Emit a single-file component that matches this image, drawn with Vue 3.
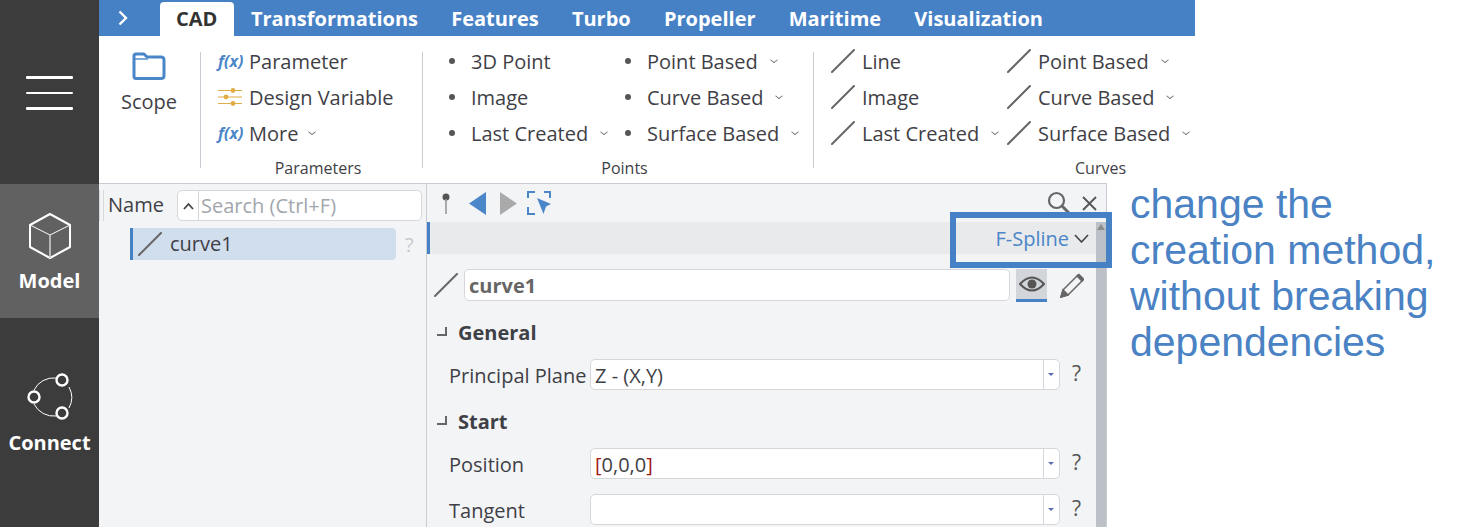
<template>
  <div class="app">
    <aside class="side">
      <button class="side__menu" aria-label="Menu">
        <span></span><span></span><span></span>
      </button>
      <div class="side__item side__item--active">
        <svg width="46" height="48" viewBox="0 0 46 48" fill="none" stroke="#fff">
          <path d="M23 2 L43 13 V35 L23 46 L3 35 V13 Z" stroke-width="2" stroke-linejoin="round" />
          <path d="M3 13 L23 23 L43 13" stroke-width="1" />
          <path d="M23 23 V46" stroke-width="1.6" stroke="#ccc" />
        </svg>
        <span>Model</span>
      </div>
      <div class="side__item side__item--connect">
        <svg width="48" height="48" viewBox="0 0 48 48" fill="none" stroke="#fff">
          <path d="M8 17 A22 22 0 0 1 30 5 M43 14 A22 22 0 0 1 43 35 M30 43 A22 22 0 0 1 8 31" stroke-width="1" />
          <circle cx="36" cy="7" r="5.5" stroke-width="2.4" />
          <circle cx="8" cy="24" r="5.5" stroke-width="2.4" />
          <circle cx="36" cy="40" r="5.5" stroke-width="2.4" />
        </svg>
        <span>Connect</span>
      </div>
    </aside>

    <div class="main">
      <nav class="tabs">
        <svg class="tabs__toggle" width="10" height="16" viewBox="0 0 10 16" fill="none" stroke="#fff" stroke-width="2.4">
          <path d="M1.5 1.5 L8 8 L1.5 14.5" />
        </svg>
        <span v-for="tab in tabs" :key="tab" class="tabs__tab" :class="{ 'tabs__tab--active': tab === 'CAD' }">{{ tab }}</span>
      </nav>

      <section class="ribbon">
        <div class="group group--scope">
          <svg width="34" height="28" viewBox="0 0 34 28" fill="none" stroke="#4a86c8" stroke-width="3">
            <path d="M2 24 V4 Q2 2 4 2 H12 L15 5 H29 Q32 5 32 8 V24 Q32 26.500 29 26.500 H4 Q2 26.500 2 24 Z" stroke-linejoin="round" />
            <path d="M2 7 H16" stroke-width="1.4" />
          </svg>
          <span class="group__scope-label">Scope</span>
        </div>

        <div class="group group--params">
          <div class="group__body">
            <div class="group__col">
              <div class="tool"><i class="fx">f(x)</i>Parameter</div>
              <div class="tool">
                <svg class="tool__icon-sliders" width="25" height="20" viewBox="0 0 25 20" stroke="#e0ae45" fill="#e0ae45">
                  <path d="M1 3.500 H25 M1 10 H25 M1 16.500 H25" stroke-width="1.2" />
                  <circle cx="16" cy="3.500" r="2.400" stroke="none" />
                  <circle cx="9" cy="10" r="2.400" stroke="none" />
                  <circle cx="16" cy="16.500" r="2.400" stroke="none" />
                </svg>
                Design Variable
              </div>
              <div class="tool"><i class="fx">f(x)</i>More<span class="caret caret--more"></span></div>
            </div>
          </div>
          <div class="group__label">Parameters</div>
        </div>

        <div class="group group--points">
          <div class="group__body">
            <div class="group__col group__col--points">
              <div v-for="p in pointsLeft" :key="p.name" class="tool">
                <span class="dot"></span>{{ p.name }}<span v-if="p.more" class="caret"></span>
              </div>
            </div>
            <div class="group__col">
              <div v-for="p in based" :key="p" class="tool">
                <span class="dot"></span>{{ p }}<span class="caret"></span>
              </div>
            </div>
          </div>
          <div class="group__label">Points</div>
        </div>

        <div class="group group--curves">
          <div class="group__body">
            <div class="group__col group__col--curves">
              <div v-for="c in curvesLeft" :key="c.name" class="tool">
                <svg class="line-icon" width="24" height="24" viewBox="0 0 24 24"><path d="M1 23 L23 1" /></svg>
                {{ c.name }}<span v-if="c.more" class="caret"></span>
              </div>
            </div>
            <div class="group__col">
              <div v-for="c in based" :key="c" class="tool">
                <svg class="line-icon" width="24" height="24" viewBox="0 0 24 24"><path d="M1 23 L23 1" /></svg>
                {{ c }}<span class="caret"></span>
              </div>
            </div>
          </div>
          <div class="group__label">Curves</div>
        </div>
      </section>

      <div class="lower">
        <div class="work">
          <section class="tree">
            <div class="tree__head">
              <span class="tree__name">Name</span>
              <div class="search">
                <span class="search__sort">
                  <svg width="11" height="8" viewBox="0 0 11 8" fill="none" stroke="#444" stroke-width="1.8"><path d="M1 7 L5.500 2 L10 7" /></svg>
                </span>
                <span class="search__text">Search (Ctrl+F)</span>
              </div>
            </div>
            <div class="tree__row">
              <div class="tree__item">
                <svg class="line-icon" width="24" height="24" viewBox="0 0 24 24"><path d="M1 23 L23 1" /></svg>
                <span class="tree__label">curve1</span>
              </div>
              <span class="tree__help">?</span>
            </div>
          </section>

          <section class="props">
            <div class="props__tools">
              <svg width="10" height="24" viewBox="0 0 10 24">
                <circle cx="5" cy="6" r="3.500" fill="#555" />
                <path d="M5 8 V23" stroke="#999" stroke-width="1.600" />
              </svg>
              <svg class="props__back" width="17" height="23" viewBox="0 0 17 23"><path d="M17 0 V23 L0 11.500 Z" fill="#4a86c8" /></svg>
              <svg class="props__next" width="17" height="23" viewBox="0 0 17 23"><path d="M0 0 V23 L17 11.500 Z" fill="#aaa" /></svg>
              <svg class="props__pick" width="25" height="24" viewBox="0 0 25 24" fill="none" stroke="#4a86c8" stroke-width="2">
                <path d="M1 7 V1 H8 M17 1 H23 V7 M1 16 V23 H8" />
                <path d="M10 7 L24 13 L19 15.500 L16.500 23 Z" fill="#4a86c8" stroke="none" />
              </svg>
              <span class="props__spacer"></span>
              <svg width="24" height="24" viewBox="0 0 24 24" fill="none" stroke="#666" stroke-width="2.200">
                <circle cx="9.500" cy="9.500" r="7.500" />
                <path d="M15 15 L23 23" stroke-width="3" />
              </svg>
              <svg class="props__close" width="15" height="15" viewBox="0 0 15 15" fill="none" stroke="#555" stroke-width="1.800">
                <path d="M1 1 L14 14 M14 1 L1 14" />
              </svg>
            </div>

            <div class="props__scrollarea">
              <div class="props__content">
                <div class="band">
                  <span class="band__method">F-Spline</span>
                  <svg width="15" height="9" viewBox="0 0 15 9" fill="none" stroke="#444" stroke-width="1.600"><path d="M1 1 L7.500 8 L14 1" /></svg>
                </div>

                <div class="title-row">
                  <svg class="line-icon" width="24" height="24" viewBox="0 0 24 24"><path d="M1 23 L23 1" /></svg>
                  <div class="title-row__input">curve1</div>
                  <span class="title-row__eye">
                    <svg width="26" height="16" viewBox="0 0 26 16">
                      <path d="M1 8 Q13 -5 25 8 Q13 21 1 8 Z" fill="none" stroke="#555" stroke-width="2" />
                      <circle cx="13" cy="8" r="4.500" fill="#555" />
                    </svg>
                  </span>
                  <svg class="title-row__pencil" width="24" height="25" viewBox="0 0 24 25" fill="none" stroke="#666" stroke-width="1.500">
                    <path d="M1 24 L3 17 L18 2 L23 7 L8 22 Z" stroke-linejoin="round" />
                    <path d="M1 24 L3 17 L8 22 Z" fill="#666" />
                    <path d="M17 3 L22 8 L23.500 6 L19 1.500 Z" fill="#666" />
                  </svg>
                </div>

                <h3 class="section">General</h3>
                <div class="field field--first">
                  <label class="field__label">Principal Plane</label>
                  <div class="field__input">
                    <span class="field__value">Z - (X,Y)</span>
                    <span class="field__drop"></span>
                  </div>
                  <span class="field__help">?</span>
                </div>

                <h3 class="section section--start">Start</h3>
                <div class="field field--first">
                  <label class="field__label">Position</label>
                  <div class="field__input">
                    <span class="field__value"><b class="bracket">[</b>0,0,0<b class="bracket">]</b></span>
                    <span class="field__drop"></span>
                  </div>
                  <span class="field__help">?</span>
                </div>
                <div class="field field--next">
                  <label class="field__label">Tangent</label>
                  <div class="field__input">
                    <span class="field__value"></span>
                    <span class="field__drop"></span>
                  </div>
                  <span class="field__help">?</span>
                </div>
              </div>
              <div class="scrollbar"><span class="scrollbar__arrow"></span></div>
            </div>

            <div class="callout"></div>
          </section>
        </div>

        <p class="note">change the creation method, without breaking dependencies</p>
      </div>
    </div>
  </div>
</template>

<script setup>
const tabs = ['CAD', 'Transformations', 'Features', 'Turbo', 'Propeller', 'Maritime', 'Visualization']

const pointsLeft = [
  { name: '3D Point' },
  { name: 'Image' },
  { name: 'Last Created', more: true }
]

const curvesLeft = [
  { name: 'Line' },
  { name: 'Image' },
  { name: 'Last Created', more: true }
]

const based = ['Point Based', 'Curve Based', 'Surface Based']
</script>

<style>
html,
body {
  margin: 0;
  background: #fff;
  overflow: hidden;
}
</style>

<style scoped>
.app {
  display: flex;
  width: 1465px;
  height: 527px;
  overflow: hidden;
  font-family: "Open Sans", "Liberation Sans", sans-serif;
  font-size: 20px;
  color: #3f3f46;
}

.side {
  flex: none;
  width: 99px;
  background: #3c3c3c;
  color: #fff;
  font-weight: 700;
}

.side__menu {
  display: flex;
  flex-direction: column;
  gap: 13px;
  width: 100%;
  height: 184px;
  padding: 76px 0 0 26px;
  border: 0;
  background: none;
  box-sizing: border-box;
}

.side__menu span {
  display: block;
  width: 47px;
  height: 2.500px;
  background: #fff;
  border-radius: 1px;
}

.side__item {
  display: flex;
  flex-direction: column;
  align-items: center;
  box-sizing: border-box;
  height: 134px;
  padding-top: 28px;
}

.side__item svg {
  flex: none;
}

.side__item--active {
  background: #616161;
}

.side__item--connect {
  padding-top: 55px;
}

.side__item span {
  flex: none;
  margin-top: 7px;
  line-height: 27px;
}

.side__item--connect span {
  margin-top: 8px;
}

.main {
  flex: none;
  width: 1366px;
}

.tabs {
  display: flex;
  align-items: flex-end;
  width: 1096px;
  height: 36px;
  background: #4681c6;
  color: #fff;
  font-weight: 700;
  line-height: 34px;
}

.tabs__toggle {
  align-self: center;
  margin: 0 32px 0 19px;
}

.tabs__tab {
  padding: 0 16.600px;
}

.tabs__tab--active {
  height: 34px;
  padding: 0 17px 0 16px;
  background: #fff;
  color: #333;
  border-radius: 4px 4px 0 0;
}

.ribbon {
  display: flex;
  width: 1096px;
  height: 147px;
  box-sizing: border-box;
  background: #fff;
}

.group {
  position: relative;
  box-sizing: border-box;
  padding-top: 7px;
}

.group::after {
  content: "";
  position: absolute;
  right: 0;
  top: 16px;
  width: 1px;
  height: 116px;
  background: #c9ccd2;
}

.group--scope {
  display: flex;
  flex-direction: column;
  align-items: center;
  width: 102px;
  padding-right: 2px;
  padding-top: 16px;
}

.group__scope-label {
  margin-top: 7px;
  line-height: 30px;
}

.group--params {
  width: 222px;
  padding-left: 16px;
}

.group--points {
  width: 391px;
  padding-left: 26px;
}

.group--curves {
  width: 381px;
  padding-left: 17px;
}

.group--curves::after {
  display: none;
}

.group__body {
  display: flex;
  height: 108px;
}

.group__col {
  display: flex;
  flex-direction: column;
}

.group__col--points {
  width: 176px;
}

.group__col--curves {
  width: 176px;
}

.group__label {
  position: absolute;
  left: 0;
  right: 0;
  top: 119px;
  font-size: 16px;
  line-height: 26px;
  text-align: center;
}

.group--params .group__label {
  padding-left: 12px;
}

.group--points .group__label {
  padding-left: 12px;
}

.group--curves .group__label {
  padding-left: 192px;
}

.tool {
  display: flex;
  align-items: center;
  height: 36px;
  white-space: nowrap;
}

.fx {
  width: 32px;
  padding-left: 1px;
  box-sizing: border-box;
  font-size: 16px;
  font-weight: 700;
  color: #4a86c8;
}

.tool__icon-sliders {
  margin-right: 7px;
}

.dot {
  flex: none;
  width: 6px;
  height: 6px;
  margin-right: 16px;
  background: #555;
  border-radius: 50%;
}

.caret {
  width: 5px;
  height: 5px;
  margin: -3px 0 0 13px;
  border-right: 1px solid #666;
  border-bottom: 1px solid #666;
  transform: scale(0.9, 0.7) rotate(45deg);
}

.caret--more {
  margin-left: 11px;
}

.line-icon {
  flex: none;
  fill: none;
  stroke: #666;
  stroke-width: 2;
  stroke-linecap: round;
}

.tool .line-icon {
  margin-right: 7px;
}

.lower {
  display: flex;
}

.work {
  display: flex;
  flex: none;
  width: 1008px;
  height: 344px;
  box-sizing: border-box;
  background: #f3f4f6;
  border-top: 1px solid #c9ccd2;
  border-right: 1px solid #c9ccd2;
}

.tree {
  flex: none;
  width: 327px;
  padding-top: 6px;
  box-sizing: border-box;
}

.tree__head {
  display: flex;
  align-items: center;
  height: 31px;
  padding-left: 4px;
  box-shadow: inset 4px 0 0 -3px #d5d7db;
}

.tree__name {
  width: 74px;
  padding-left: 4px;
  box-sizing: border-box;
  border-left: 1px solid #d5d7db;
  line-height: 29px;
  height: 31px;
}

.search {
  display: flex;
  width: 245px;
  height: 31px;
  box-sizing: border-box;
  background: #fff;
  border: 1px solid #d5d7db;
  border-radius: 5px;
}

.search__sort {
  display: flex;
  align-items: center;
  justify-content: center;
  width: 20px;
  border-right: 1px solid #d5d7db;
}

.search__text {
  padding-left: 2px;
  color: #a2a6ad;
  line-height: 29px;
}

.tree__row {
  display: flex;
  align-items: center;
  margin: 7px 0 0 31px;
}

.tree__item {
  display: flex;
  align-items: center;
  gap: 8px;
  width: 266px;
  height: 32px;
  box-sizing: border-box;
  padding-left: 5px;
  background: #d0deee;
  border-left: 3px solid #4681c6;
  border-radius: 0 4px 4px 0;
}

.tree__label {
  margin-top: -2px;
}

.tree__help {
  margin-left: 9px;
  color: #c8cace;
}

.props {
  position: relative;
  flex: 1;
  display: flex;
  flex-direction: column;
  min-width: 0;
  border-left: 1px solid #c9ccd2;
}

.props__tools {
  display: flex;
  align-items: center;
  flex: none;
  height: 38px;
  padding: 0 9px 0 14px;
}

.props__back {
  margin-left: 18px;
}

.props__next {
  margin-left: 14px;
}

.props__pick {
  margin-left: 10px;
}

.props__spacer {
  flex: 1;
}

.props__close {
  margin-left: 11px;
}

.props__scrollarea {
  display: flex;
  flex: 1;
  min-height: 0;
}

.props__content {
  flex: 1;
  min-width: 0;
  overflow: hidden;
}

.band {
  display: flex;
  align-items: center;
  justify-content: flex-end;
  gap: 5px;
  height: 32px;
  box-sizing: border-box;
  padding-right: 7px;
  background: #e9eaec;
  border-left: 3px solid #4681c6;
}

.band__method {
  color: #4a86c8;
}

.title-row {
  display: flex;
  align-items: center;
  height: 34px;
  margin-top: 14px;
  padding-left: 7px;
}

.title-row__input {
  width: 546px;
  height: 32px;
  margin-left: 6px;
  padding-left: 4px;
  box-sizing: border-box;
  background: #fff;
  border: 1px solid #d5d7db;
  border-radius: 5px;
  color: #666;
  font-weight: 700;
  line-height: 32px;
}

.title-row__eye {
  display: flex;
  align-items: center;
  justify-content: center;
  width: 31px;
  height: 33px;
  margin-left: 6px;
  box-sizing: border-box;
  background: #d2d5da;
  border-bottom: 3px solid #4681c6;
}

.title-row__pencil {
  margin-left: 13px;
}

.section {
  display: flex;
  align-items: center;
  height: 30px;
  margin: 16px 0 0;
  padding-left: 31px;
  position: relative;
  font-size: 20px;
  font-weight: 700;
  line-height: 30px;
}

.section::before {
  content: "";
  position: absolute;
  left: 10px;
  top: 9px;
  width: 10px;
  height: 9px;
  border-right: 2px solid #666;
  border-bottom: 2px solid #666;
  box-sizing: border-box;
}

.section--start {
  margin-top: 17px;
}

.field {
  display: flex;
  align-items: center;
  height: 31px;
  padding-left: 22px;
}

.field--first {
  margin-top: 11px;
}

.field--next {
  margin-top: 15px;
}

.field__label {
  width: 141px;
  flex: none;
  padding-top: 2px;
}

.field__input {
  display: flex;
  width: 470px;
  height: 31px;
  box-sizing: border-box;
  background: #fff;
  border: 1px solid #d5d7db;
  border-radius: 5px;
}

.field__value {
  flex: 1;
  padding-left: 4px;
  color: #3f3f46;
  line-height: 31px;
}

.bracket {
  color: #a31414;
  font-weight: 400;
}

.field__drop {
  position: relative;
  flex: none;
  width: 15px;
  border-left: 1px solid #d5d7db;
}

.field__drop::after {
  content: "";
  position: absolute;
  left: 4px;
  top: 13px;
  border-left: 3px solid transparent;
  border-right: 3px solid transparent;
  border-top: 3px solid #5c6bb0;
}

.field__help {
  margin: -3px 0 0 12px;
  font-size: 21px;
  color: #555;
}

.scrollbar {
  position: relative;
  flex: none;
  width: 10px;
  background: #bcc0c7;
}

.scrollbar__arrow {
  position: absolute;
  left: 1px;
  top: 2px;
  border-left: 4px solid transparent;
  border-right: 4px solid transparent;
  border-bottom: 6px solid #8b8b8b;
}

.callout {
  position: absolute;
  left: 523px;
  top: 28px;
  width: 162px;
  height: 56px;
  box-sizing: border-box;
  border: 6px solid #4681c6;
}

.note {
  width: 330px;
  margin: -2px 0 0 23px;
  font-family: "Liberation Sans", Arial, sans-serif;
  font-size: 41px;
  line-height: 46px;
  color: #4a82c4;
}
</style>
